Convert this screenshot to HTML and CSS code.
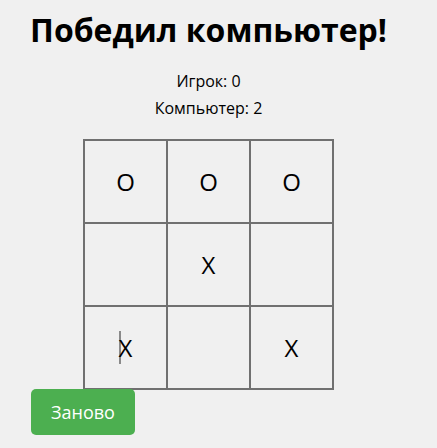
FILE: index.html
```html
<!DOCTYPE html>
<html lang="ru">
<head>
<meta charset="utf-8">
<title>Крестики-нолики</title>
<link rel="stylesheet" href="styles.css">
</head>
<body>
<div class="game">
  <h1 class="title">Победил компьютер!</h1>
  <div class="score">
    <p class="score-line">Игрок: 0</p>
    <p class="score-line">Компьютер: 2</p>
  </div>
  <div class="board">
    <div class="cell">O</div>
    <div class="cell">O</div>
    <div class="cell">O</div>
    <div class="cell"></div>
    <div class="cell">X</div>
    <div class="cell"></div>
    <div class="cell"><span class="caret"></span>X</div>
    <div class="cell"></div>
    <div class="cell">X</div>
  </div>
  <div class="actions">
    <button class="restart">Заново</button>
  </div>
</div>
</body>
</html>
```
FILE: styles.css
```css
html, body {
  background: #f0f0f0;
}
body {
  margin: 8px;
  font-family: "Open Sans", "Noto Sans", sans-serif;
  color: #000;
}
.game {
  width: 401px;
  text-align: center;
}
.title {
  margin: 0;
  font-size: 32px;
  font-weight: 700;
  line-height: 44px;
}
.score {
  margin-top: 18px;
}
.score-line {
  margin: 0 0 5px;
  font-size: 16px;
  line-height: 22px;
}
.board {
  display: grid;
  grid-template-columns: repeat(3, 83px);
  grid-auto-rows: 83px;
  width: max-content;
  margin: 20px auto 0;
  border-left: 2px solid #707070;
  border-top: 2px solid #707070;
}
.cell {
  display: flex;
  align-items: center;
  justify-content: center;
  border-right: 2px solid #707070;
  border-bottom: 2px solid #707070;
  font-size: 24px;
  line-height: 33px;
}
.caret {
  display: inline-block;
  width: 0;
  height: 33px;
  border-left: 2px solid #8a8a8a;
  margin-right: -2px;
  vertical-align: top;
}
.actions {
  display: flex;
  padding-left: 23px;
  margin-top: -1px;
}
.restart {
  font-family: "Open Sans", "Noto Sans", sans-serif;
  font-size: 18px;
  line-height: 26px;
  padding: 10px 20px;
  color: #fff;
  background: #4caf50;
  border: none;
  border-radius: 5px;
}
```
